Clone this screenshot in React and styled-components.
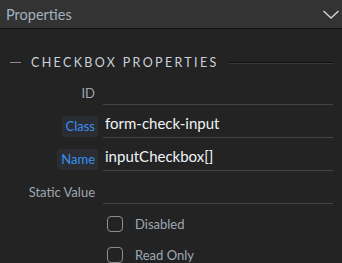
import React from "react";
import styled, { createGlobalStyle } from "styled-components";

const Global = createGlobalStyle`
  html, body { margin: 0; padding: 0; background: #232323; }
  body { font-family: Lato, "Noto Sans", sans-serif; }
`;

const Panel = styled.div`
  width: 342px;
  height: 263px;
  overflow: hidden;
  background: #232323;
`;

const Header = styled.div`
  height: 28px;
  background: #333333;
  border-bottom: 1px solid #151515;
  display: flex;
  align-items: center;
  justify-content: space-between;
  padding: 0 2px 0 6px;
  color: #a3b1bf;
  font-size: 14.5px;
`;

const Body = styled.div`
  padding: 25px 9px 0 10px;
`;

const SectionTitle = styled.div`
  display: flex;
  align-items: center;
  gap: 10px;
  color: #c9d2da;
  font-size: 12.5px;
  letter-spacing: 2.35px;
  height: 16px;
  &::before,
  &::after {
    content: "";
    height: 1px;
    background: #8a8a8a;
  }
  &::before {
    width: 11px;
  }
  &::after {
    flex: 1;
    background: #0e0e0e;
    box-shadow: 0 1px 0 #3a3a3a;
  }
`;

const Rows = styled.div`
  display: flex;
  flex-direction: column;
  margin-top: 2px;
`;

const Row = styled.div`
  display: grid;
  grid-template-columns: 88px 1fr;
  gap: 5px;
  align-items: end;
  height: 33px;
`;

const Label = styled.div`
  justify-self: end;
  font-size: 13px;
  line-height: 21px;
  height: 21px;
  padding: 0 3px 0 4px;
  margin-bottom: 1px;
  border-radius: 3px;
  color: ${({ $set }) => ($set ? "#3a8ff0" : "#9ea8b2")};
  background: ${({ $set }) => ($set ? "#2a2e33" : "transparent")};
`;

const Value = styled.div`
  height: 32px;
  border-bottom: 1px solid #444;
  box-sizing: border-box;
  display: flex;
  align-items: flex-end;
  padding: 0 0 4px 2px;
  color: #eef3f8;
  font-size: 15px;
  line-height: 20px;
`;

const Checks = styled.div`
  display: flex;
  flex-direction: column;
  gap: 15px;
  padding: 12px 0 0 97px;
`;

const Check = styled.label`
  display: flex;
  align-items: center;
  gap: 12px;
  font-size: 13px;
  color: #9ea8b2;
  height: 16px;
`;

const Box = styled.span`
  width: 14px;
  height: 14px;
  border: 1px solid #8a8f94;
  border-radius: 4px;
`;

const Chevron = () => (
  <svg width="18" height="12" viewBox="0 0 18 12">
    <path d="M1.5 3 L9 10 L16.5 3" fill="none" stroke="#d0d0d0" strokeWidth="1.5" />
  </svg>
);

const fields = [
  { label: "ID", value: "" },
  { label: "Class", value: "form-check-input", set: true },
  { label: "Name", value: "inputCheckbox[]", set: true },
  { label: "Static Value", value: "" },
];

export default function App() {
  return (
    <Panel>
      <Global />
      <Header>
        <span>Properties</span>
        <Chevron />
      </Header>
      <Body>
        <SectionTitle>CHECKBOX PROPERTIES</SectionTitle>
        <Rows>
          {fields.map((f) => (
            <Row key={f.label}>
              <Label $set={f.set}>{f.label}</Label>
              <Value>{f.value}</Value>
            </Row>
          ))}
        </Rows>
        <Checks>
          <Check>
            <Box />
            Disabled
          </Check>
          <Check>
            <Box />
            Read Only
          </Check>
        </Checks>
      </Body>
    </Panel>
  );
}
